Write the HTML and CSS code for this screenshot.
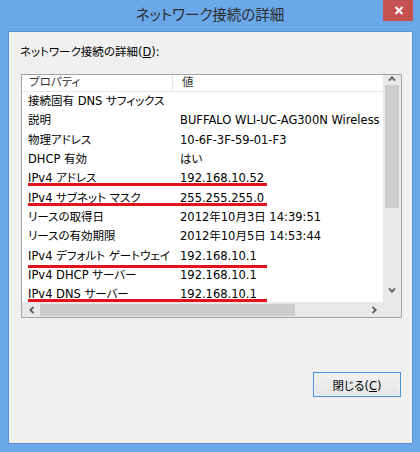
FILE: index.html
```html
<!DOCTYPE html>
<html lang="ja">
<head>
    <meta charset="UTF-8">
    <title>ネットワーク接続の詳細</title>
    <link rel="stylesheet" href="styles.css">
</head>
<body>
    <div class="window">
        <div class="titlebar">
            <span></span>
            <h1 class="title">ネットワーク接続の詳細</h1>
            <button class="close" aria-label="閉じる">
                <svg width="10" height="9" viewBox="0 0 10 9"><path d="M1.5 1 L8.5 8 M8.5 1 L1.5 8" stroke="#fff" stroke-width="2" fill="none"/></svg>
            </button>
        </div>
        <div class="client">
            <div class="caption">ネットワーク接続の詳細(<u>D</u>):</div>
            <div class="listview">
                <div class="list">
                    <div class="head">
                        <div class="hcell">プロパティ</div>
                        <div class="hcell">値</div>
                    </div>
                    <div class="row"><div>接続固有 DNS サフィックス</div><div></div></div>
                    <div class="row"><div>説明</div><div>BUFFALO WLI-UC-AG300N Wireless</div></div>
                    <div class="row"><div>物理アドレス</div><div>10-6F-3F-59-01-F3</div></div>
                    <div class="row"><div>DHCP 有効</div><div>はい</div></div>
                    <div class="row marked"><div>IPv4 アドレス</div><div>192.168.10.52</div></div>
                    <div class="row marked"><div>IPv4 サブネット マスク</div><div>255.255.255.0</div></div>
                    <div class="row"><div>リースの取得日</div><div>2012年10月3日 14:39:51</div></div>
                    <div class="row"><div>リースの有効期限</div><div>2012年10月5日 14:53:44</div></div>
                    <div class="row marked low"><div>IPv4 デフォルト ゲートウェイ</div><div>192.168.10.1</div></div>
                    <div class="row"><div>IPv4 DHCP サーバー</div><div>192.168.10.1</div></div>
                    <div class="row marked"><div>IPv4 DNS サーバー</div><div>192.168.10.1</div></div>
                </div>
                <div class="vscroll">
                    <div class="arrow up">
                        <svg width="8" height="5" viewBox="0 0 8 5"><path d="M1 4.5 L4 1.3 L7 4.5" stroke="#5a5a5a" stroke-width="1.8" fill="none"/></svg>
                    </div>
                    <div class="vthumb"></div>
                    <div class="track"></div>
                    <div class="arrow down">
                        <svg width="8" height="5" viewBox="0 0 8 5"><path d="M1 0.5 L4 3.7 L7 0.5" stroke="#5a5a5a" stroke-width="1.8" fill="none"/></svg>
                    </div>
                </div>
                <div class="hscroll">
                    <div class="arrow left">
                        <svg width="5" height="8" viewBox="0 0 5 8"><path d="M4.5 1 L1.3 4 L4.5 7" stroke="#5a5a5a" stroke-width="1.8" fill="none"/></svg>
                    </div>
                    <div class="hthumb"></div>
                    <div class="track"></div>
                    <div class="arrow right">
                        <svg width="5" height="8" viewBox="0 0 5 8"><path d="M0.5 1 L3.7 4 L0.5 7" stroke="#5a5a5a" stroke-width="1.8" fill="none"/></svg>
                    </div>
                </div>
                <div class="corner"></div>
            </div>
            <div class="actions">
                <button class="btn">閉じる(<u>C</u>)</button>
            </div>
        </div>
    </div>
</body>
</html>
```

FILE: styles.css
```css
body {
    margin: 0;
    font-family: "DejaVu Sans", "Noto Sans CJK JP", sans-serif;
    font-size: 11.5px;
    font-feature-settings: "palt" 1;
    color: #000;
}

.window {
    width: 420px;
    height: 452px;
    background-color: #6aa8ea;
    overflow: hidden;
}

.titlebar {
    display: grid;
    grid-template-columns: 1fr auto 1fr;
    height: 31px;
}

.title {
    margin: 0;
    font-size: 14.5px;
    font-weight: normal;
    line-height: 31px;
    color: #2b2b2b;
}

.close {
    justify-self: end;
    align-self: start;
    display: flex;
    align-items: center;
    justify-content: center;
    width: 30px;
    height: 21px;
    margin-right: 7px;
    padding: 0 0 0 1px;
    border: none;
    background-color: #c75050;
}

.client {
    box-sizing: border-box;
    height: 413px;
    margin: 0 7px 0 8px;
    padding: 12px 10px 0 12px;
    background-color: #f0f0f0;
    border: 1px solid #5b93d1;
}

.caption {
    margin-left: -1px;
    line-height: 17px;
}

u {
    text-underline-offset: 1px;
}

.listview {
    display: grid;
    grid-template-columns: 361px 18px;
    grid-template-rows: 227px 15px;
    margin-top: 13px;
    border: 1px solid #a5a5a5;
}

.list {
    background-color: #fff;
    overflow: hidden;
}

.head {
    display: grid;
    grid-template-columns: 151px 1fr;
    height: 16px;
    line-height: 14px;
    border-bottom: 1px solid #e5e5e5;
    color: #333;
}

.hcell {
    padding-left: 9px;
}

.hcell:first-child {
    padding-left: 7px;
    border-right: 1px solid #e5e5e5;
}

.row {
    position: relative;
    display: grid;
    grid-template-columns: 152px 1fr;
    height: 19.35px;
    line-height: 19.35px;
}

.row div {
    padding-left: 6px;
    white-space: nowrap;
    overflow: hidden;
}

/* red annotation lines */
.row.marked::after {
    content: "";
    position: absolute;
    left: 6px;
    top: 14px;
    width: 239px;
    height: 3px;
    background-color: #e3131b;
}

.row.marked.low::after {
    top: 18px;
}

.vscroll, .hscroll, .corner {
    background-color: #e8e8e8;
}

.vscroll {
    display: flex;
    flex-direction: column;
    align-items: center;
}

.hscroll {
    display: flex;
    align-items: center;
}

.arrow {
    display: flex;
    align-items: center;
    justify-content: center;
}

.arrow.up {
    height: 9px;
    align-items: flex-start;
    padding-top: 1px;
}

.arrow.down {
    height: 24px;
}

.arrow.left {
    width: 18px;
}

.arrow.right {
    width: 17px;
}

.track {
    flex: 1;
}

.vthumb {
    width: 14px;
    height: 123px;
    background-color: #cdcdcd;
}

.hthumb {
    width: 255px;
    height: 12px;
    background-color: #cdcdcd;
}

.actions {
    display: flex;
    justify-content: flex-end;
    margin-top: 54px;
    padding-right: 1px;
}

.btn {
    width: 88px;
    height: 25px;
    padding: 0;
    font: inherit;
    color: #000;
    background: linear-gradient(#f2f2f2, #e5e5e5);
    border: 1px solid #4a93dc;
    box-shadow: inset 0 0 0 1px #e8f2fb;
}
```
